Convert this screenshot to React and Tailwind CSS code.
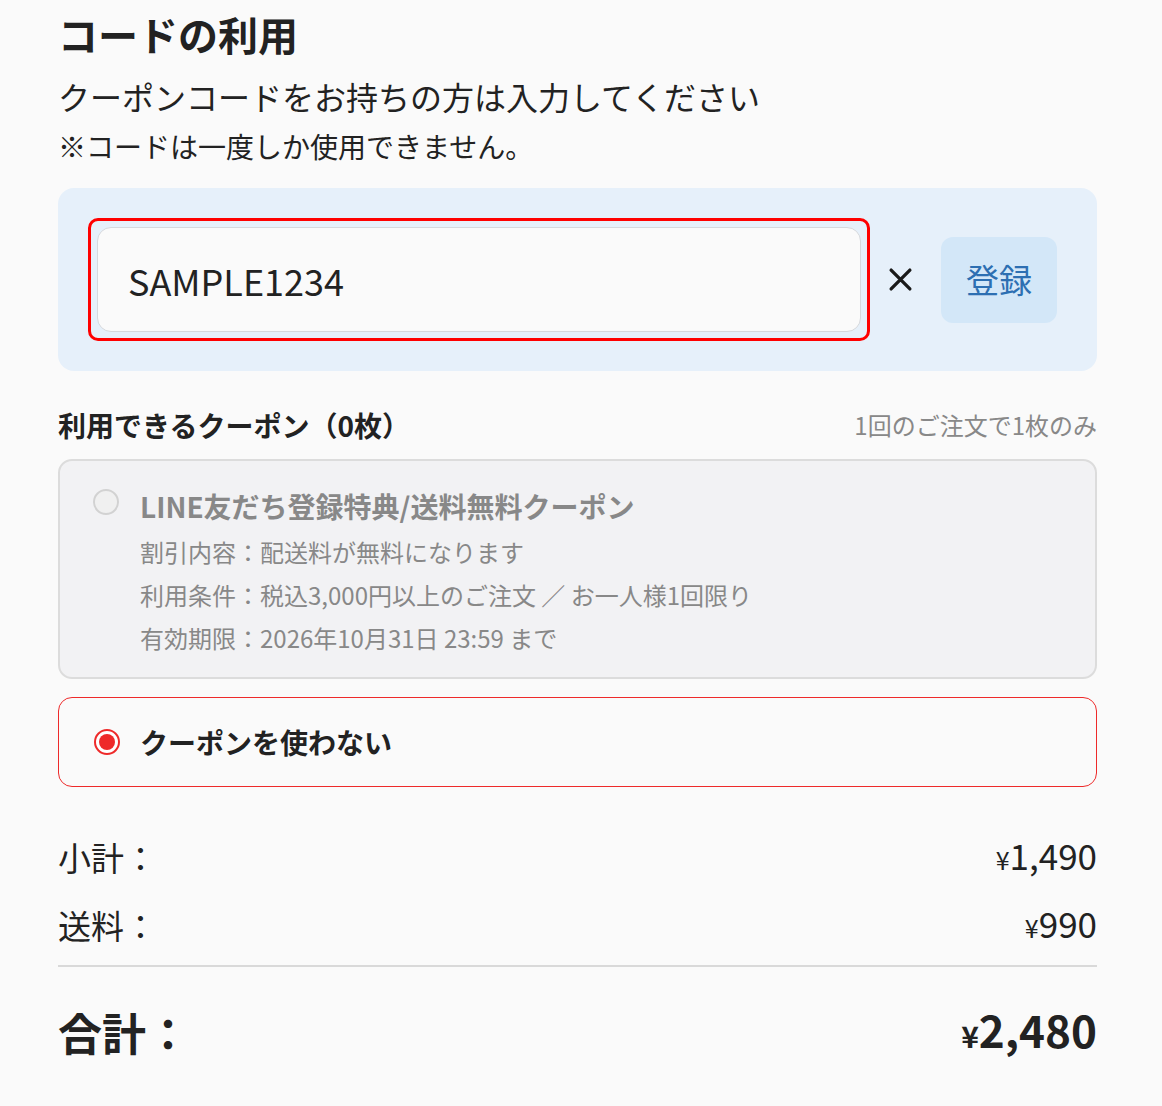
import React, { useState } from 'react';

const coupon = {
    title: 'LINE友だち登録特典/送料無料クーポン',
    lines: [
        '割引内容：配送料が無料になります',
        '利用条件：税込3,000円以上のご注文 ／ お一人様1回限り',
        '有効期限：2026年10月31日 23:59 まで',
    ],
};

function Price({ value, bold }) {
    return (
        <span className={bold ? 'font-bold' : 'text-[35px]'}>
            <span className={bold ? 'text-[30px]' : 'text-[25px]'}>¥</span>
            {value}
        </span>
    );
}

export default function App() {
    const [code, setCode] = useState('SAMPLE1234');

    return (
        <div
            className="min-h-screen bg-[#fafafa] text-[#222] pl-[58px] pr-[65px] pt-2 pb-10"
            style={{ fontFamily: '"Noto Sans CJK JP", "Noto Sans", sans-serif' }}
        >
            {/* Header */}
            <h1 className="text-[40px] leading-[52px] font-bold">コードの利用</h1>
            <p className="mt-[14px] text-[32px] leading-[44px]">クーポンコードをお持ちの方は入力してください</p>
            <p className="mt-[8px] text-[28px] leading-[40px]">※コードは一度しか使用できません。</p>

            {/* Code input */}
            <div className="mt-[22px] bg-[#e6f0fa] rounded-[16px] pl-[30px] pr-[40px] pt-[30px] pb-[30px] flex items-center">
                <div className="flex-1 border-[3px] border-[#ff0000] rounded-[10px] p-[6px]">
                    <input
                        value={code}
                        onChange={(e) => setCode(e.target.value)}
                        className="w-full h-[105px] bg-[#fafafa] border border-[#d6d8dc] rounded-[14px] px-[30px] text-[36px] text-[#222] outline-none"
                    />
                </div>
                <button className="ml-[18px] w-[25px] h-[25px] flex items-center justify-center" onClick={() => setCode('')}>
                    <svg viewBox="0 0 24 24" className="w-[25px] h-[25px]" fill="none" stroke="#1a1a1a" strokeWidth="3.2" strokeLinecap="round">
                        <path d="M3 3 L21 21 M21 3 L3 21" />
                    </svg>
                </button>
                <button className="ml-[28px] w-[116px] h-[86px] rounded-[12px] bg-[#d3e7f8] text-[#2d6fb2] text-[33px]">
                    登録
                </button>
            </div>

            {/* Coupon list */}
            <div className="mt-[36px] flex items-center justify-between">
                <h2 className="text-[28px] leading-[36px] font-bold">利用できるクーポン（0枚）</h2>
                <span className="text-[24px] leading-[36px] text-[#888]">1回のご注文で1枚のみ</span>
            </div>

            <div className="mt-[16px] bg-[#f2f2f4] border-2 border-[#dcdcdc] rounded-[14px] pl-[33px] pr-6 pt-[25px] pb-[18px] flex">
                <div className="mt-[3px] w-[26px] h-[26px] rounded-full border-2 border-[#d2d2d2] bg-[#f0f0f0] shrink-0" />
                <div className="ml-[21px] text-[#888]">
                    <div className="text-[28px] leading-[40px] font-bold">{coupon.title}</div>
                    <div className="mt-[4px] text-[24px] leading-[43px]">
                        {coupon.lines.map((line) => (
                            <div key={line}>{line}</div>
                        ))}
                    </div>
                </div>
            </div>

            <div className="mt-[18px] h-[90px] border-[1.5px] border-[#ee2a2a] rounded-[14px] pl-[35px] flex items-center">
                <div className="w-[26px] h-[26px] rounded-full border-2 border-[#ee2a2a] bg-white flex items-center justify-center">
                    <div className="w-[16px] h-[16px] rounded-full bg-[#ee2a2a]" />
                </div>
                <span className="ml-[20px] text-[28px] font-bold">クーポンを使わない</span>
            </div>

            {/* Totals */}
            <div className="mt-[44px] flex items-center justify-between text-[33px] leading-[48px]">
                <span>小計：</span>
                <Price value="1,490" />
            </div>
            <div className="mt-[16px] flex items-center justify-between text-[33px] leading-[48px]">
                <span>送料：</span>
                <Price value="990" />
            </div>
            <div className="mt-[14px] h-[2px] bg-[#d9d9d9]" />
            <div className="mt-[32px] flex items-center justify-between text-[44px] leading-[60px] font-bold">
                <span>合計：</span>
                <Price value="2,480" bold />
            </div>
        </div>
    );
}
